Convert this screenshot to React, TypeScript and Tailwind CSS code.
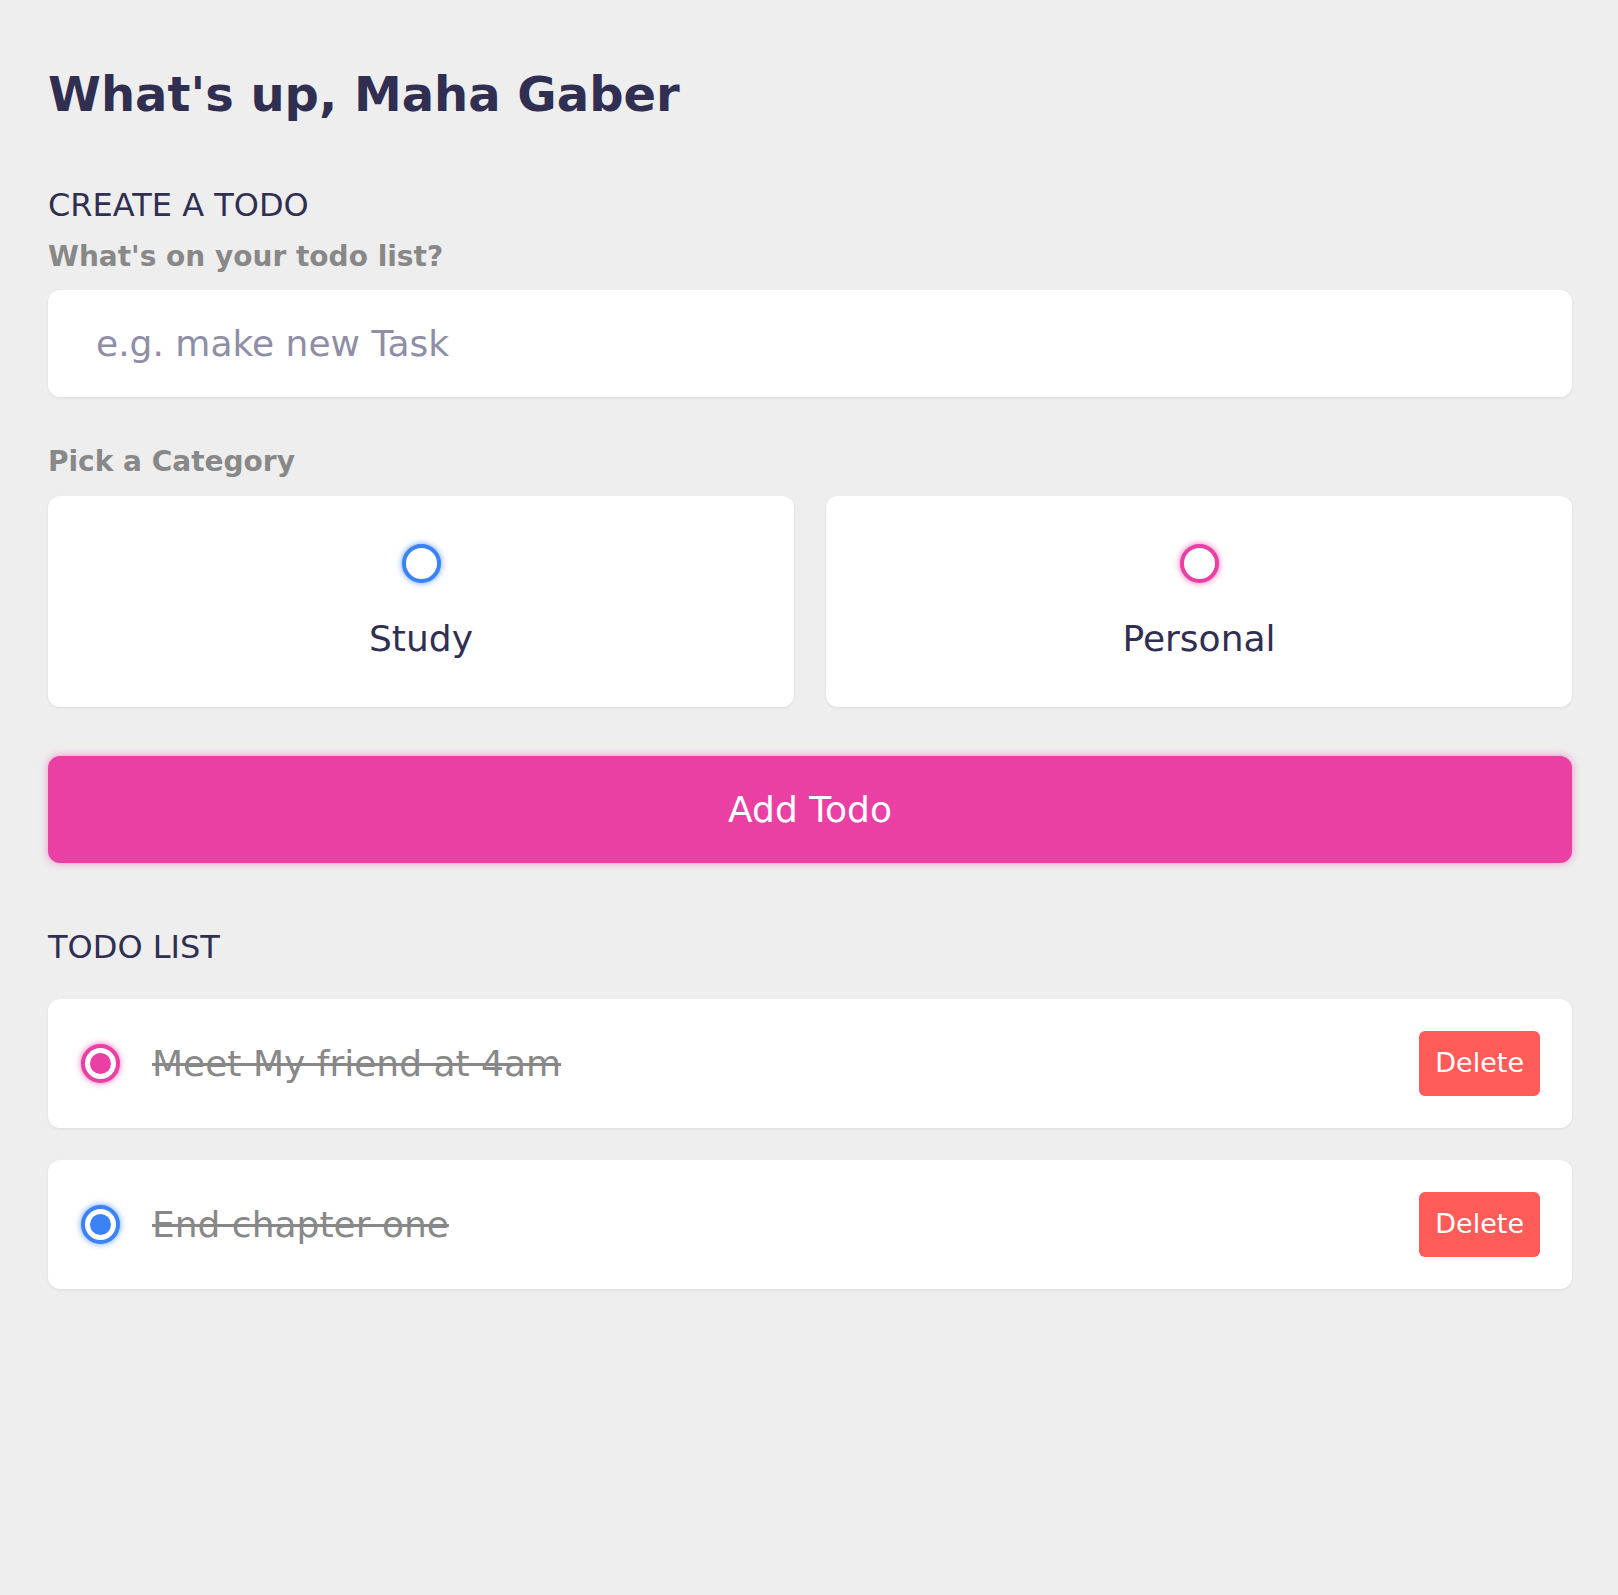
import { useState } from "react";

type Category = "study" | "personal";

type Todo = {
  id: number;
  text: string;
  category: Category;
  done: boolean;
};

const categoryRing: Record<Category, string> = {
  study: "border-[#3b82f6] shadow-[0_0_6px_rgba(59,130,246,0.8)]",
  personal: "border-[#ea40a4] shadow-[0_0_6px_rgba(234,64,164,0.8)]",
};

const categoryDot: Record<Category, string> = {
  study: "bg-[#3b82f6]",
  personal: "bg-[#ea40a4]",
};

const initialTodos: Todo[] = [
  { id: 1, text: "Meet My friend at 4am", category: "personal", done: true },
  { id: 2, text: "End chapter one", category: "study", done: true },
];

export default function App() {
  const [todos, setTodos] = useState<Todo[]>(initialTodos);
  const [text, setText] = useState("");
  const [category, setCategory] = useState<Category | null>(null);

  const addTodo = () => {
    if (!text.trim() || !category) return;
    setTodos([...todos, { id: Date.now(), text, category, done: false }]);
    setText("");
    setCategory(null);
  };

  return (
    <div className="min-h-screen bg-[#eeeeee] pl-12 pr-[46px] pt-[66px] pb-24 font-['DejaVu_Sans',sans-serif] text-[#302f52]">
      <h1 className="text-[48px] font-bold leading-[56px]">What's up, Maha Gaber</h1>

      {/* Create */}
      <section>
        <h2 className="mt-[65px] text-[32px] leading-[37px]">CREATE A TODO</h2>
        <p className="mt-4 text-[28px] font-bold leading-[33px] text-[#888888]">What's on your todo list?</p>
        <input
          value={text}
          onChange={(e) => setText(e.target.value)}
          placeholder="e.g. make new Task"
          className="mt-[17px] block h-[107px] w-full rounded-xl bg-white pl-12 text-[36px] text-[#302f52] shadow-[0_1px_3px_rgba(0,0,0,0.08)] outline-none placeholder:text-[#8e8ea6]"
        />

        <p className="mt-12 text-[28px] font-bold leading-[33px] text-[#888888]">Pick a Category</p>
        <div className="mt-[18px] grid grid-cols-2 gap-8">
          {(["study", "personal"] as Category[]).map((c) => (
            <button
              key={c}
              onClick={() => setCategory(c)}
              className="flex flex-col items-center rounded-xl bg-white pt-12 pb-12 shadow-[0_1px_3px_rgba(0,0,0,0.08)]"
            >
              <span
                className={`flex h-[39px] w-[39px] items-center justify-center rounded-full border-4 bg-white ${categoryRing[c]}`}
              >
                {category === c && <span className={`h-5 w-5 rounded-full ${categoryDot[c]}`} />}
              </span>
              <span className="mt-[35px] text-[36px] leading-[41px] text-[#302f52]">
                {c === "study" ? "Study" : "Personal"}
              </span>
            </button>
          ))}
        </div>

        <button
          onClick={addTodo}
          className="mt-[49px] block h-[107px] w-full rounded-xl bg-[#ea40a4] text-[36px] text-white shadow-[0_0_8px_rgba(234,64,164,0.55)]"
        >
          Add Todo
        </button>
      </section>

      {/* List */}
      <section>
        <h2 className="mt-[66px] text-[32px] leading-[37px]">TODO LIST</h2>
        <div className="mt-[33px] flex flex-col gap-8">
          {todos.map((t) => (
            <div
              key={t.id}
              className="flex items-center rounded-xl bg-white py-8 pr-8 pl-[33px] shadow-[0_1px_3px_rgba(0,0,0,0.08)]"
            >
              <button
                onClick={() => setTodos(todos.map((x) => (x.id === t.id ? { ...x, done: !x.done } : x)))}
                className={`flex h-[39px] w-[39px] shrink-0 items-center justify-center rounded-full border-4 bg-white ${categoryRing[t.category]}`}
              >
                {t.done && <span className={`h-[21px] w-[21px] rounded-full ${categoryDot[t.category]}`} />}
              </button>
              <span
                className={`ml-8 flex-1 text-[36px] leading-[41px] ${t.done ? "text-[#888888] line-through" : "text-[#302f52]"}`}
              >
                {t.text}
              </span>
              <button
                onClick={() => setTodos(todos.filter((x) => x.id !== t.id))}
                className="h-[65px] rounded-md bg-[#ff5c59] px-4 text-[27px] text-white"
              >
                Delete
              </button>
            </div>
          ))}
        </div>
      </section>
    </div>
  );
}
